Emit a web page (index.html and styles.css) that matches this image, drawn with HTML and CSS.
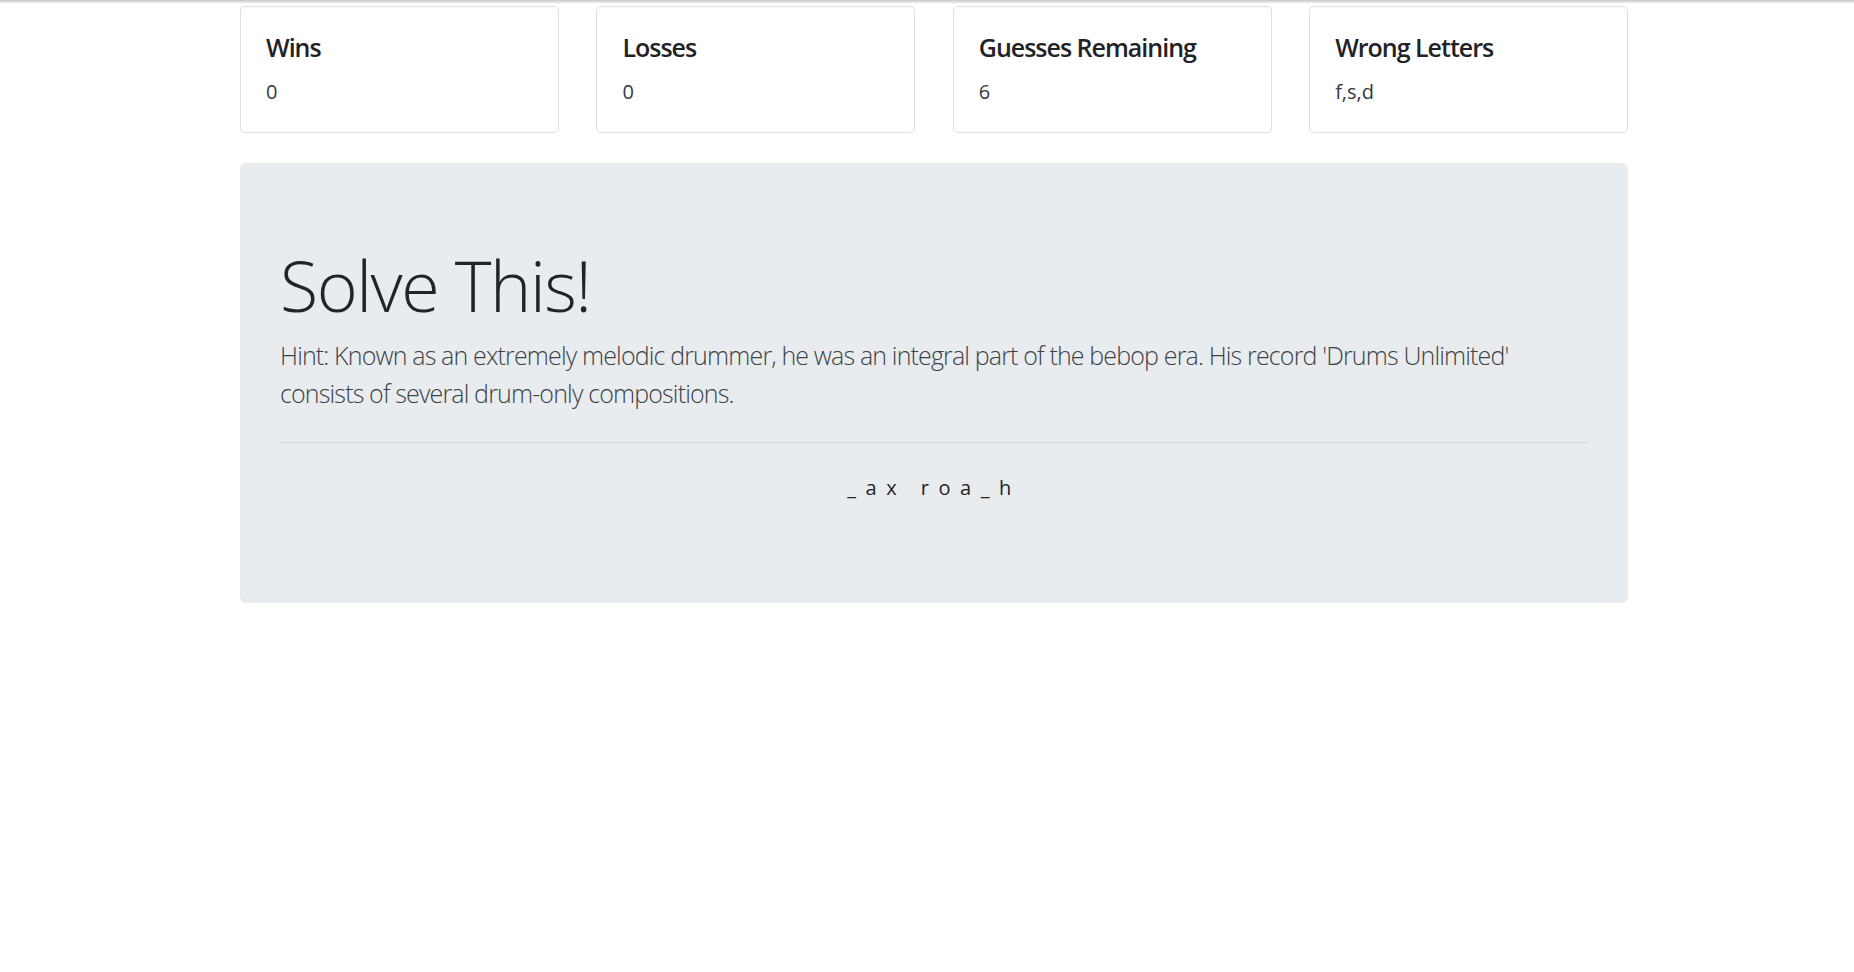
FILE: index.html
```html
<!DOCTYPE html>
<html lang="en">
<head>
<meta charset="utf-8">
<title>Hangman</title>
<link rel="stylesheet" href="styles.css">
</head>
<body>
<div class="chrome-strip"></div>
<div class="container">
  <div class="stats">
    <div class="card">
      <h5 class="card-title">Wins</h5>
      <p class="card-text">0</p>
    </div>
    <div class="card">
      <h5 class="card-title">Losses</h5>
      <p class="card-text">0</p>
    </div>
    <div class="card">
      <h5 class="card-title">Guesses Remaining</h5>
      <p class="card-text">6</p>
    </div>
    <div class="card">
      <h5 class="card-title">Wrong Letters</h5>
      <p class="card-text">f,s,d</p>
    </div>
  </div>
  <div class="jumbotron">
    <h1 class="display">Solve This!</h1>
    <p class="lead">Hint: Known as an extremely melodic drummer, he was an integral part of the bebop era. His record 'Drums Unlimited' consists of several drum-only compositions.</p>
    <hr class="divider">
    <p class="word">_ax roa_h</p>
  </div>
</div>
</body>
</html>
```
FILE: styles.css
```css
html, body {
  margin: 0;
  padding: 0;
  background: #fff;
}
body {
  font-family: "Open Sans", "Noto Sans", "Liberation Sans", sans-serif;
  color: #212529;
  font-size: 20px;
  line-height: 1.5;
}
.chrome-strip {
  position: absolute;
  top: 0;
  left: 0;
  width: 1854px;
  height: 3px;
  background: linear-gradient(to bottom, #c9c9c9, #ececec);
}
.container {
  width: 1388px;
  margin: 0 0 0 240px;
  padding-top: 6px;
}
.stats {
  display: grid;
  grid-template-columns: repeat(4, 1fr);
  column-gap: 37.5px;
  margin-bottom: 30px;
}
.card {
  border: 1px solid rgba(0, 0, 0, 0.125);
  border-radius: 5px;
  padding: 25px;
  background: #fff;
}
.card-title {
  margin: 0 0 15px 0;
  font-size: 25px;
  font-weight: 600;
  line-height: 30px;
  letter-spacing: -1px;
  color: #1f2326;
}
.card-text {
  margin: 0;
  font-size: 20px;
  line-height: 30px;
  color: #343a40;
}
.jumbotron {
  background: #e9ecef;
  border-radius: 6px;
  padding: 80px 40px;
}
.display {
  margin: 0 0 10px 0;
  font-size: 70px;
  font-weight: 300;
  line-height: 84px;
  letter-spacing: -1.5px;
}
.lead {
  margin: 0 0 20px 0;
  font-size: 25px;
  font-weight: 300;
  line-height: 37.5px;
  letter-spacing: -0.85px;
  color: #3d4247;
}
.divider {
  margin: 30px 0;
  border: 0;
  border-top: 1px solid rgba(0, 0, 0, 0.1);
}
.word {
  margin: 0 0 20px 0;
  text-align: center;
  font-size: 20px;
  line-height: 30px;
  letter-spacing: 9.5px;
  white-space: pre;
}
```
